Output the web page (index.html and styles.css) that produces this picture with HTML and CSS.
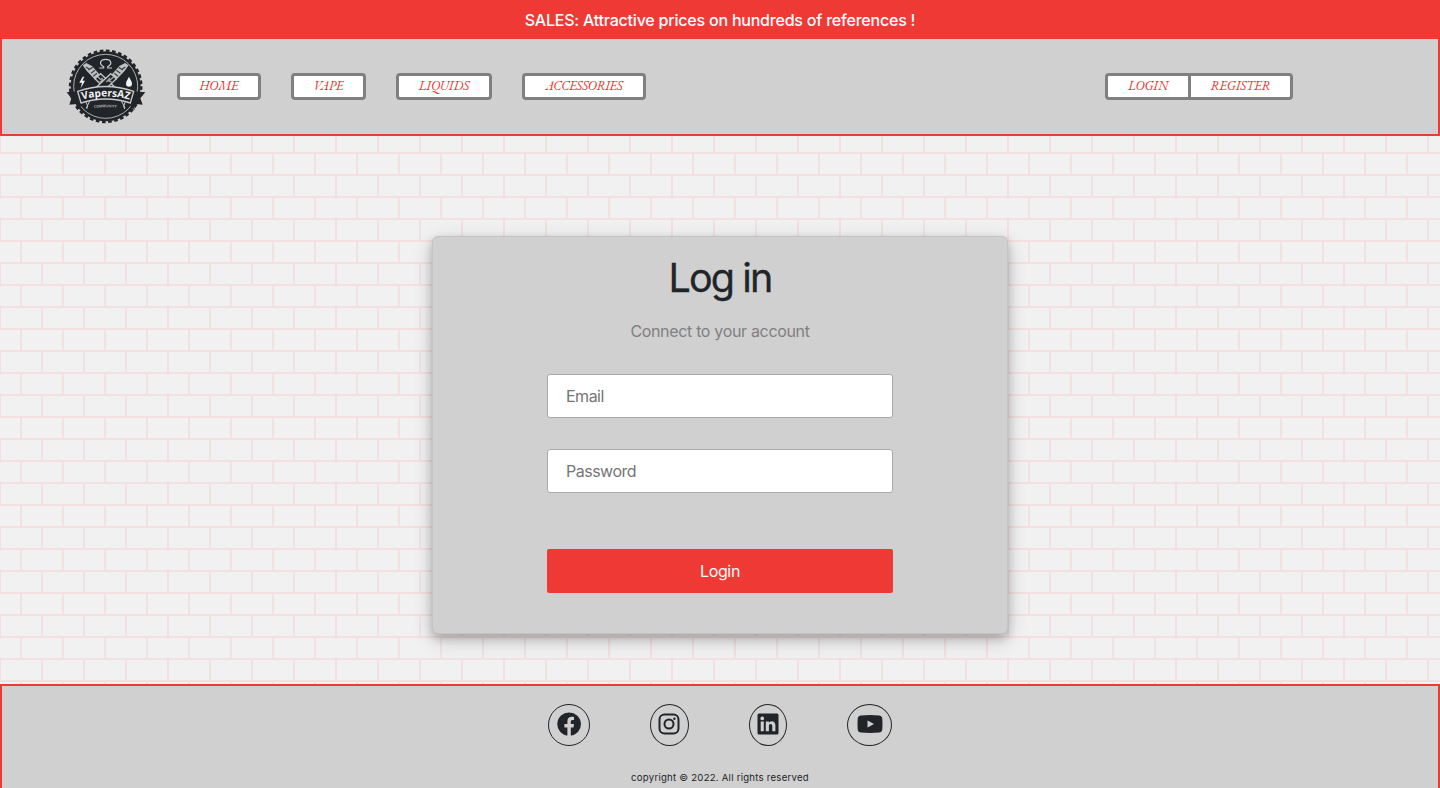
FILE: index.html
```html
<!DOCTYPE html>
<html lang="en">
<head>
<meta charset="utf-8">
<title>VapersAZ - Log in</title>
<link rel="stylesheet" href="styles.css">
</head>
<body>
<div class="banner"><span>SALES: Attractive prices on hundreds of references !</span></div>
<header class="header">
  <a class="logo" href="#">
    <svg width="80" height="76" viewBox="48 36 240 228" fill="none">
      <circle cx="167" cy="151" r="105" fill="#212529"/>
      <circle cx="167" cy="151" r="107" stroke="#212529" stroke-width="7" stroke-dasharray="11 7.67"/>
      <circle cx="167" cy="151" r="96" stroke="#c8c9ca" stroke-width="2.5"/>
      <path d="M148 96h13v-4c-16-8-10-22 6-22s22 14 6 22v4h13" stroke="#d0d0d0" stroke-width="3.5"/>
      <path d="M98 88l11-7 17 9 24 27-14 15-25-26z" fill="#bfc0c1"/>
      <path d="M108 93l12 8M115 102l13-8M123 112l12-9M130 121l11-9" stroke="#414548" stroke-width="4"/>
      <path d="M135 128l17-15 54 51-17 17z" fill="#212529" stroke="#c2c3c4" stroke-width="4"/>
      <path d="M143 122l14 13-11 5M154 126l11 12" stroke="#a0a2a4" stroke-width="4"/>
      <path d="M236 88l-11-7-17 9-24 27 14 15 25-26z" fill="#bfc0c1"/>
      <path d="M226 93l-12 8M219 102l-13-8M211 112l-12-9M204 121l-11-9" stroke="#414548" stroke-width="4"/>
      <path d="M199 128l-17-15-54 51 17 17z" fill="#212529" stroke="#c2c3c4" stroke-width="4"/>
      <path d="M191 122l-14 13 11 5M180 126l-11 12" stroke="#a0a2a4" stroke-width="4"/>
      <path d="M98 122l-10 18h8l-4 17 13-23h-8l6-12z" fill="#f2f2f2"/>
      <path d="M237 122c-4 9-9 14-9 21a9 9 0 0 0 18 0c0-7-5-12-9-21z" fill="#f2f2f2"/>
      <path d="M109 199q7 13 1 20M225 199q-7 13-1 20M119 196l-10 20M215 196l10 20" stroke="#c8c9ca" stroke-width="3"/>
      <path d="M91 165l-41 4 14 18-6 19 25-3-2 20 29-29zM243 165l43 4-15 18 7 19-26-3 2 20-29-29z" fill="#212529"/>
      <path d="M83 166q84-29 168 0l-10 35q-74-24-148 0z" fill="#212529" stroke="#c8c9ca" stroke-width="4"/>
      <path id="word" d="M97 191Q167 172 240 191"/>
      <path id="sub" d="M132 216Q167 211 202 216"/>
      <text class="logo-word"><textPath href="#word" textLength="143" lengthAdjust="spacingAndGlyphs">VapersAZ</textPath></text>
      <text class="logo-sub"><textPath href="#sub" textLength="68">COMMUNITY</textPath></text>
    </svg>
  </a>
  <nav class="nav">
    <a class="pill home" href="#">HOME</a>
    <a class="pill vape" href="#">VAPE</a>
    <a class="pill liquids" href="#">LIQUIDS</a>
    <a class="pill accessories" href="#">ACCESSORIES</a>
  </nav>
  <div class="account">
    <a class="login-link" href="#">LOGIN</a>
    <a class="register-link" href="#">REGISTER</a>
  </div>
</header>
<main class="main">
  <form class="card">
    <h1 class="title">Log in</h1>
    <p class="subtitle">Connect to your account</p>
    <input class="field" type="email" placeholder="Email">
    <input class="field password" type="password" placeholder="Password">
    <button class="submit" type="button">Login</button>
  </form>
</main>
<footer class="footer">
  <div class="social">
    <a class="ring facebook" href="#"><svg width="24" height="24" viewBox="0 0 24 24"><path d="M12 .5A11.600 11.600 0 0 0 10.400 23.600V15.400H7.400v-3.500h3V9.400c0-3 1.700-4.600 4.300-4.600 1.300 0 2.300.2 2.300.2v3h-1.400c-1.400 0-1.800.9-1.800 1.800v2.100H17l-.5 3.500h-2.700v8.200A11.600 11.600 0 0 0 12 .5z"/></svg></a>
    <a class="ring instagram" href="#"><svg width="22" height="22" viewBox="0 0 22 22" fill="none" stroke="#212529" stroke-width="2"><rect x="1.500" y="1.500" width="19" height="19" rx="5"/><circle cx="11" cy="11" r="4.500"/><circle cx="16.400" cy="5.700" r="1.200" fill="#212529" stroke="none"/></svg></a>
    <a class="ring linkedin" href="#"><svg width="22" height="22" viewBox="0 0 22 22"><path fill-rule="evenodd" d="M2 .5h18q1.500 0 1.500 1.500v18q0 1.500-1.500 1.500H2Q.5 21.500.5 20V2Q.5.5 2 .5zM3.700 8.500v9.700h3.100V8.500zM5.250 3.600a1.850 1.850 0 1 0 0 3.700 1.850 1.850 0 0 0 0-3.700zM8.800 8.500v9.700h3.100v-5.100c0-1.300.5-2.200 1.800-2.200 1.200 0 1.600 1 1.600 2.300v5h3.100v-5.600c0-2.700-1.200-4.300-3.600-4.300-1.500 0-2.500.8-2.900 1.600V8.500z"/></svg></a>
    <a class="ring youtube" href="#"><svg width="26" height="20" viewBox="0 0 26 20"><path fill-rule="evenodd" d="M4 1.400Q13 .8 22 1.400 25 1.700 25.300 4.500q.4 5.500 0 11-.3 2.800-3.300 3.100-9 .6-18 0-3-.3-3.300-3.100-.4-5.500 0-11Q1 1.700 4 1.400zM10.500 6.500v7l6.500-3.500z"/></svg></a>
  </div>
  <p class="copyright">copyright © 2022. All rights reserved</p>
</footer>
</body>
</html>
```
FILE: styles.css
```css
* { box-sizing: border-box; }
html, body { height: 100%; margin: 0; }
body {
  display: flex;
  flex-direction: column;
  overflow: hidden;
  font-family: Inter, "Liberation Sans", sans-serif;
  color: #212529;
  background-color: #f1f1f1;
  /* brick pattern: horizontal joints, then the staggered vertical joints */
  background-image:
    linear-gradient(transparent 20px, #f3e0e0 20px 22px, transparent 22px 42px, #f3e0e0 42px),
    url("data:image/svg+xml,%3Csvg xmlns='http://www.w3.org/2000/svg' width='42' height='44'%3E%3Cpath fill='%23f3e0e0' d='M0 0h1v20H0zM41 0h1v20h-1zM20 22h2v20h-2z'/%3E%3C/svg%3E");
  background-size: 42px 44px;
}
a { color: inherit; text-decoration: none; }
.banner {
  flex: none;
  height: 37px;
  padding-top: 3px;
  display: flex;
  align-items: center;
  justify-content: center;
  background: #ef3934;
  color: #fff;
  font-size: 16px;
  line-height: 20px;
  font-weight: 500;
  letter-spacing: -0.21px;
}
.header {
  flex: none;
  height: 99px;
  display: flex;
  align-items: center;
  padding: 0 145px 0 64px;
  border: 2px solid #ef3934;
  background: #d0d0d0;
}
.logo { display: block; width: 80px; height: 76px; margin-bottom: 2px; }
.logo svg { display: block; }
.logo-word { font: bold 31px "Open Sans", sans-serif; fill: #f2f2f2; }
.logo-sub { font: bold 11px "Open Sans", sans-serif; fill: #aaa; }
.nav { display: flex; gap: 30px; margin-left: 31px; }
.pill, .account {
  display: flex;
  align-items: center;
  justify-content: center;
  height: 27px;
  border: 3px solid #808080;
  border-radius: 4px;
  background: #fff;
  color: #ef2d2d;
  font: italic 13px/19px "EB Garamond", "Liberation Serif", serif;
  letter-spacing: -0.1px;
}
.pill { padding-bottom: 2px; }
.home { width: 84px; }
.vape { width: 75px; }
.liquids { width: 96px; }
.accessories { width: 124px; letter-spacing: -0.3px; }
.account { width: 188px; margin-left: auto; align-items: stretch; }
.login-link { width: 83px; text-align: center; border-right: 3px solid #808080; }
.register-link { flex: 1; text-align: center; }
.main { flex: none; height: 548px; padding-top: 100px; }
.card {
  width: 576px;
  height: 398px;
  margin: 0 auto;
  padding: 14px 114px 0;
  display: flex;
  flex-direction: column;
  border: 1px solid #c4c4c4;
  border-radius: 6px;
  background: #d0d0d0;
  box-shadow: 0 4px 8px rgba(0,0,0,.2), 0 6px 20px rgba(0,0,0,.19);
}
.title { margin: 0; font-size: 39.5px; line-height: 54px; font-weight: 400; letter-spacing: -1.9px; text-align: center; -webkit-text-stroke: .3px #212529; }
.subtitle { margin: 14px 0 30px; font-size: 16px; line-height: 25px; letter-spacing: -0.33px; color: #808080; text-align: center; }
.field {
  height: 44px;
  padding: 0 18px;
  border: 1px solid #aaa;
  border-radius: 3px;
  background: #fff;
  font: 16px Inter, sans-serif;
  letter-spacing: -0.5px;
}
.field::placeholder { color: #757575; opacity: 1; }
.password { margin-top: 31px; }
.submit {
  height: 44px;
  margin-top: 56px;
  border: 0;
  border-radius: 2px;
  background: #ef3934;
  color: #fff;
  font: 16px Inter, sans-serif;
  letter-spacing: -0.35px;
}
.footer {
  flex: 1;
  padding-top: 18px;
  border: 2px solid #ef3934;
  border-bottom: 0;
  background: #d0d0d0;
}
.social { display: flex; justify-content: center; gap: 60px; }
.ring {
  height: 42px;
  padding-bottom: 2px;
  display: flex;
  align-items: center;
  justify-content: center;
  border: 1px solid #212529;
  border-radius: 50%;
}
.ring svg { display: block; flex: none; fill: #212529; }
.ring.instagram svg { fill: none; }
.facebook { width: 42px; }
.instagram { width: 39px; padding-right: 1px; }
.linkedin { width: 38px; }
.youtube { width: 45px; }
.copyright { margin: 24px 0 0; font-size: 9.6px; line-height: 15px; letter-spacing: .24px; text-align: center; }
```
